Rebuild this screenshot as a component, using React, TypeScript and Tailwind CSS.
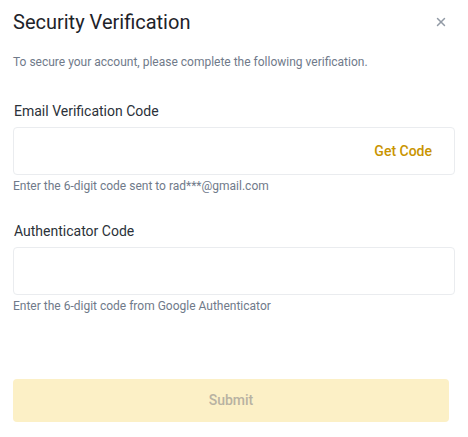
import { X } from "lucide-react";

function Field({
  label,
  hint,
  action,
  className,
}: {
  label: string;
  hint: string;
  action?: string;
  className?: string;
}) {
  return (
    <div className={className}>
      <div className="pl-[1px] text-[14px] leading-[20px] text-[#2b3139]">{label}</div>
      <div className="mt-[6px] flex h-[48px] items-center rounded-[4px] border border-[#eaecef] pl-[16px] pr-[22px]">
        <input className="h-full min-w-0 flex-1 bg-transparent text-[14px] outline-none" />
        {action && (
          <span className="text-[14px] font-medium text-[#c99400]">{action}</span>
        )}
      </div>
      <div className="mt-[3px] text-[12px] leading-[16px] text-[#707a8a]">{hint}</div>
    </div>
  );
}

export default function App() {
  return (
    <div
      className="w-[468px] h-[437px] bg-white px-[13px] pt-[8px]"
      style={{ fontFamily: "Roboto, 'Liberation Sans', sans-serif" }}
    >
      {/* Header */}
      <div className="flex h-[28px] items-center justify-between">
        <h2 className="text-[20px] leading-[28px] text-[#1e2329]">Security Verification</h2>
        <X className="mr-[7px] h-[14px] w-[14px] text-[#929aa5]" strokeWidth={2.5} />
      </div>
      <p className="mt-[18px] text-[12px] leading-[16px] text-[#707a8a]">
        To secure your account, please complete the following verification.
      </p>

      <Field
        className="mt-[31px]"
        label="Email Verification Code"
        hint="Enter the 6-digit code sent to rad***@gmail.com"
        action="Get Code"
      />
      <Field
        className="mt-[27px]"
        label="Authenticator Code"
        hint="Enter the 6-digit code from Google Authenticator"
      />

      <button className="mt-[65px] h-[43px] w-[436px] rounded-[4px] bg-[#fcf0c6] text-[14px] font-medium text-[#b8b2a2]">
        Submit
      </button>
    </div>
  );
}
